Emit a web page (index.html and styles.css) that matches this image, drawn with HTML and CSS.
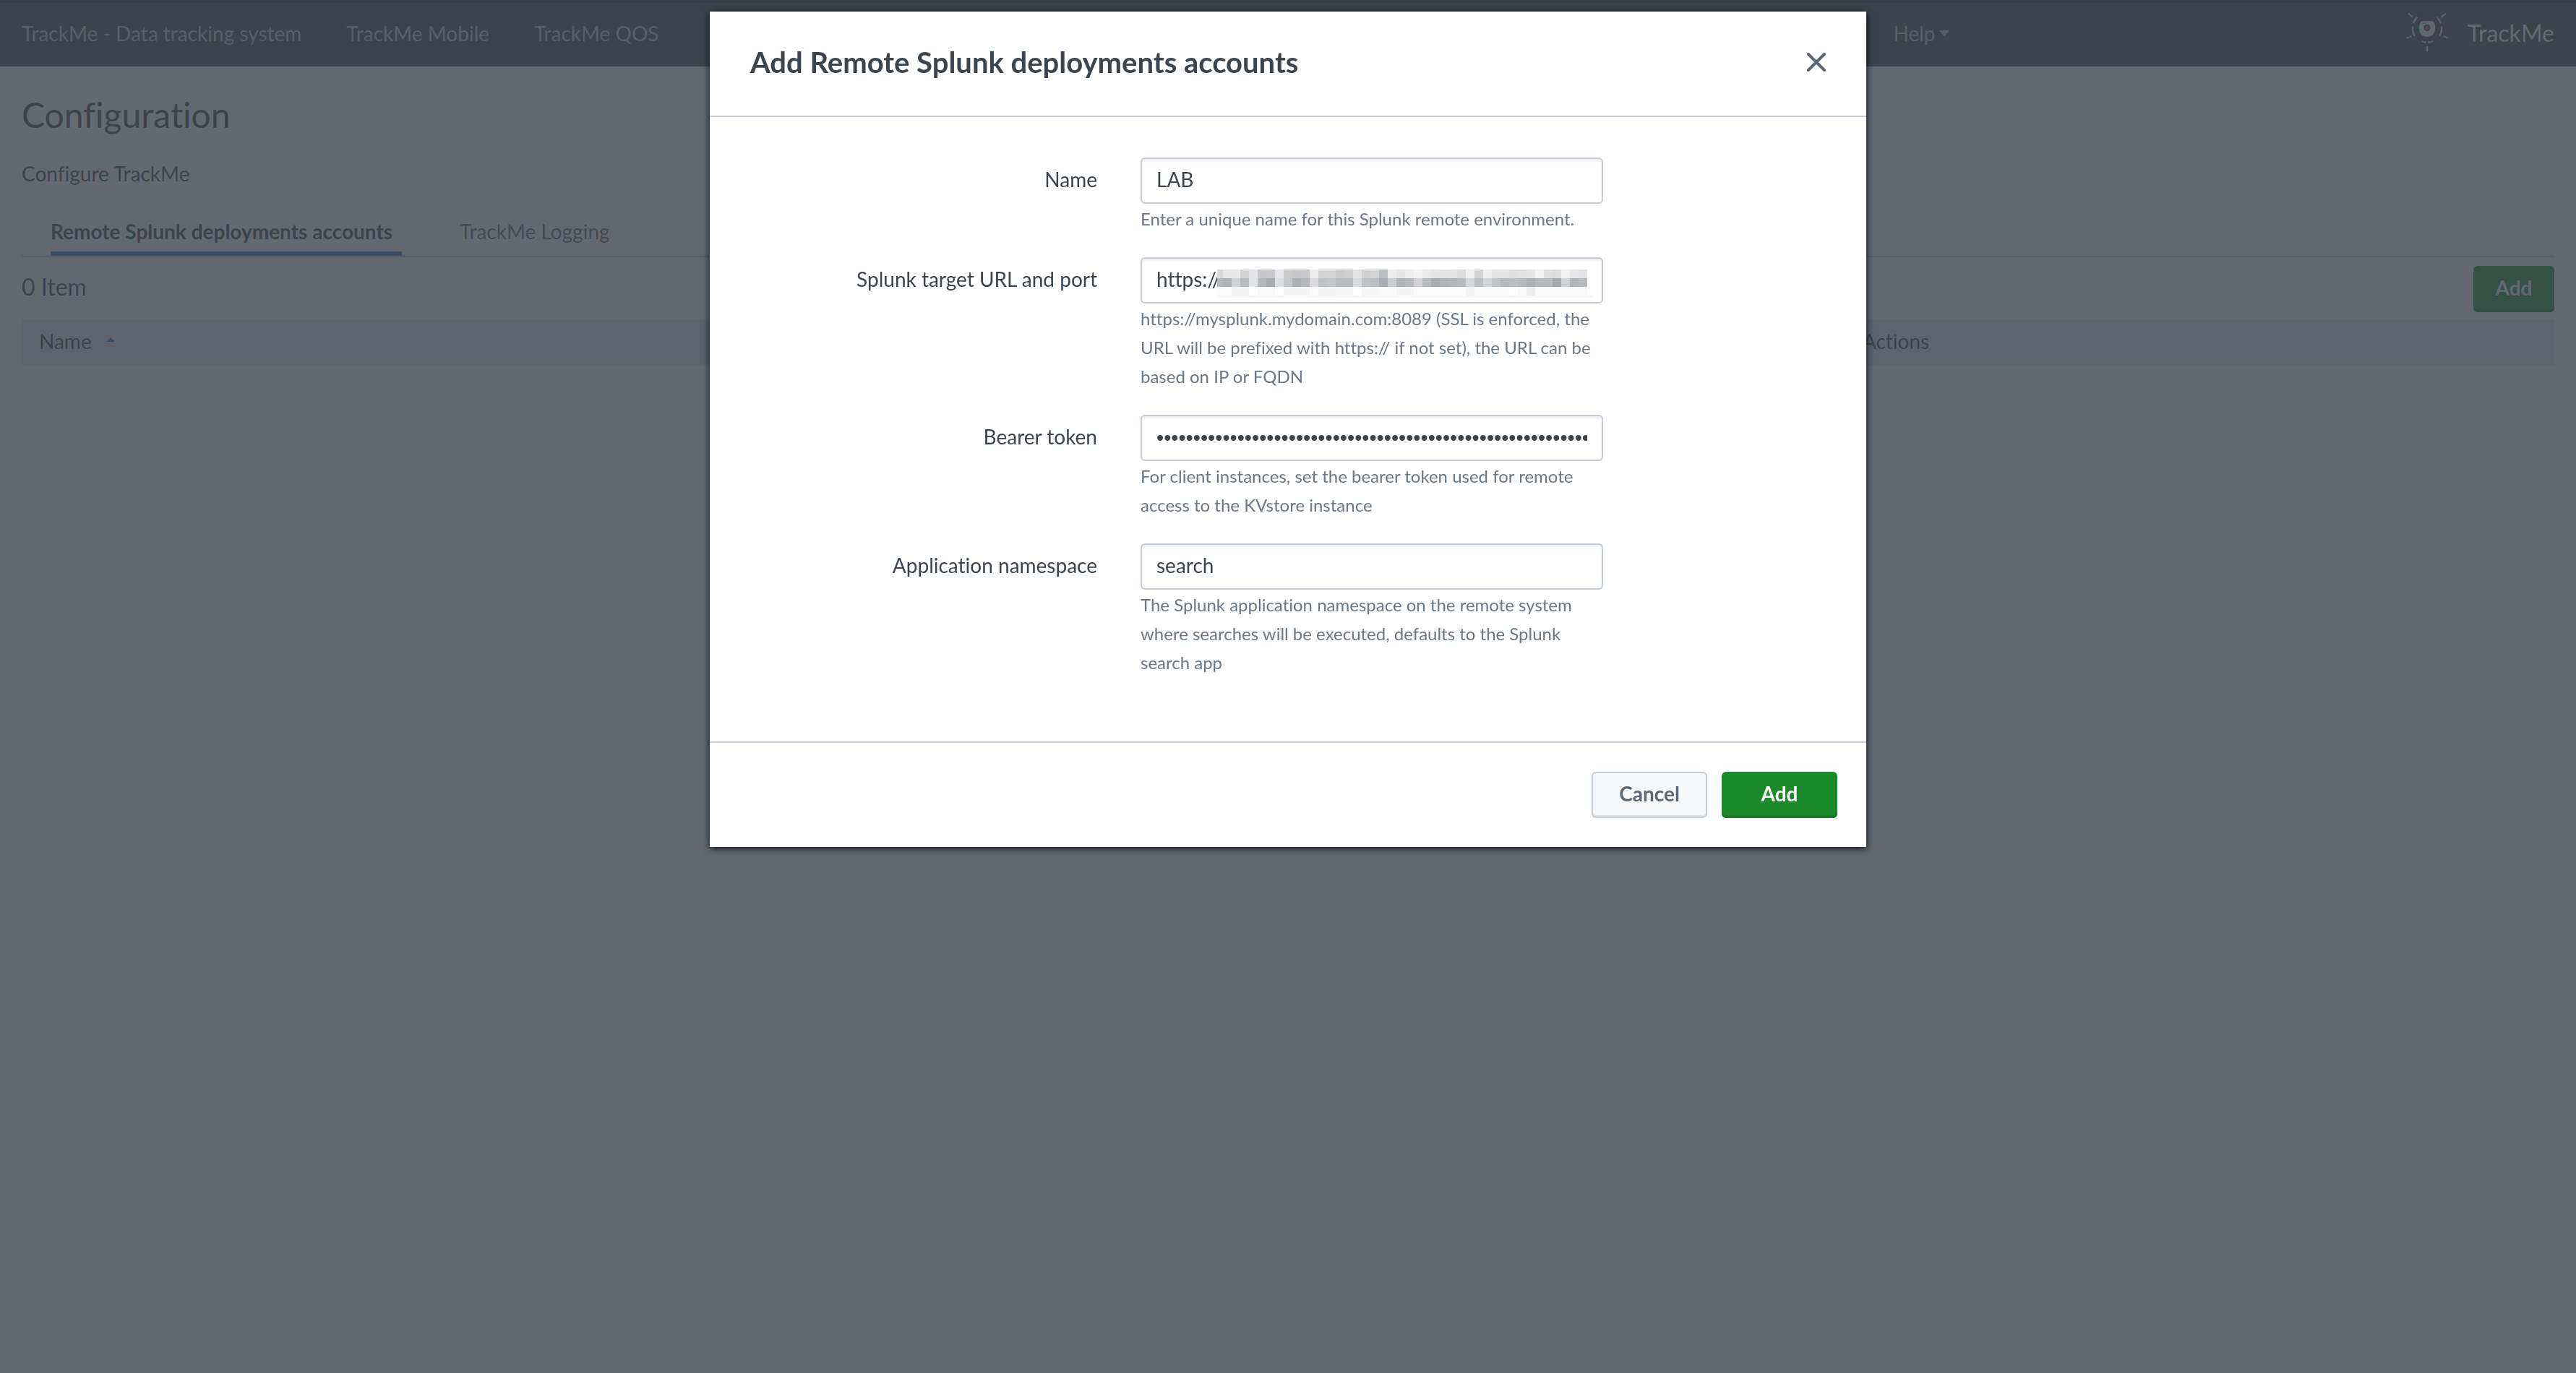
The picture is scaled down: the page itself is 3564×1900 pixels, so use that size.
FILE: index.html
```html
<!DOCTYPE html>
<html lang="en">
<head>
<meta charset="utf-8">
<title>TrackMe - Configuration</title>
<link rel="stylesheet" href="styles.css">
</head>
<body>
<header class="topbar">
  <nav class="nav">
    <a href="#">TrackMe - Data tracking system</a>
    <a href="#">TrackMe Mobile</a>
    <a href="#">TrackMe QOS</a>
  </nav>
  <nav class="nav">
    <a href="#" class="nav-menu">Help<span class="caret"></span></a>
  </nav>
  <a href="#" class="brand">
    <svg class="logo" viewBox="24 50 180 180" fill="none" stroke-linecap="butt" aria-hidden="true">
      <g stroke="#e3e6ea" stroke-width="7">
        <path d="M36 58L54 73M173 73L192 58M181 152L201 160M114 194V216"/>
        <path d="M28 161L48 152" stroke-dasharray="13 2"/>
        <path d="M73 73Q62 83 57 98M154 73Q166 83 171 98M54 112Q52 134 63 152M174 112Q176 134 165 152M91 173Q100 178 111 178M117 178Q128 178 138 173"/>
      </g>
      <g stroke="#20262c" stroke-width="3">
        <path d="M76 70Q83 63 92 59M152 70Q145 63 136 59M66 125H80M148 125H162M72 158Q78 166 86 170M156 158Q150 166 142 170M114 154V170"/>
      </g>
      <path d="M91 90H137Q148 99 148 119Q146 153 114 155Q82 153 80 119Q80 99 91 90Z" fill="#f2f4f6"/>
      <path d="M94 99H110" stroke="#8a929b" stroke-width="4"/>
      <circle cx="114" cy="117" r="14" fill="#3c444d"/>
      <circle cx="114" cy="117" r="7" fill="#e0503f"/>
    </svg>
    <span>TrackMe</span>
  </a>
</header>

<main class="page">
  <h1>Configuration</h1>
  <p class="lead">Configure TrackMe</p>
  <div class="tabs" role="tablist">
    <button type="button" role="tab" aria-selected="true" class="tab tab-active">Remote Splunk deployments accounts</button>
    <button type="button" role="tab" aria-selected="false" class="tab">TrackMe Logging</button>
  </div>
  <div class="toolbar">
    <span class="count">0 Item</span>
    <button type="button" class="btn btn-primary btn-compact">Add</button>
  </div>
  <table class="accounts">
    <thead>
      <tr><th class="col-name">Name<span class="sort"></span></th><th>Actions</th></tr>
    </thead>
  </table>
</main>

<div class="overlay">
  <form class="modal" role="dialog" aria-labelledby="modal-title">
    <div class="modal-head">
      <h2 id="modal-title">Add Remote Splunk deployments accounts</h2>
      <button type="button" class="close" aria-label="Close">
        <svg viewBox="0 0 26 26" fill="none" stroke="#5c6773" stroke-width="4" stroke-linecap="round"><path d="M2 2L24 24M24 2L2 24"/></svg>
      </button>
    </div>
    <div class="modal-body">
      <div class="field">
        <label for="name">Name</label>
        <div class="control">
          <input id="name" type="text" value="LAB">
          <p class="help">Enter a unique name for this Splunk remote environment.</p>
        </div>
      </div>
      <div class="field">
        <label for="url">Splunk target URL and port</label>
        <div class="control">
          <input id="url" type="text" value="https://">
          <span class="redacted" aria-hidden="true"></span>
          <p class="help">https://mysplunk.mydomain.com:8089 (SSL is enforced, the URL will be prefixed with https:// if not set), the URL can be based on IP or FQDN</p>
        </div>
      </div>
      <div class="field">
        <label for="token">Bearer token</label>
        <div class="control">
          <input id="token" type="password" value="0000000000000000000000000000000000000000000000000000000000000000000000">
          <p class="help">For client instances, set the bearer token used for remote access to the KVstore instance</p>
        </div>
      </div>
      <div class="field">
        <label for="namespace">Application namespace</label>
        <div class="control">
          <input id="namespace" type="text" value="search">
          <p class="help">The Splunk application namespace on the remote system where searches will be executed, defaults to the Splunk search app</p>
        </div>
      </div>
    </div>
    <div class="modal-foot">
      <button type="button" class="btn btn-secondary">Cancel</button>
      <button type="button" class="btn btn-primary">Add</button>
    </div>
  </form>
</div>
</body>
</html>
```
FILE: styles.css
```css
*, *::before, *::after { box-sizing: border-box; }

body {
  margin: 0;
  min-height: 100vh;
  background: #fff;
  color: #3c444d;
  font: 28px/40px Lato, "Open Sans", sans-serif;
  font-variant-ligatures: none;
}

h1, h2, p { margin: 0; }
a { color: inherit; text-decoration: none; }
button, input { font: inherit; color: inherit; margin: 0; }

/* Top bar */
.topbar {
  display: grid;
  grid-template-columns: 73.9% 1fr auto;
  align-items: center;
  height: 92px;
  padding: 0 30px 4px;
  border-top: 4px solid #1e242c;
  background: #3c444d;
  color: #c3cbd4;
}
.nav { display: flex; gap: 62px; }
.nav-menu { display: flex; align-items: center; gap: 6px; }
.caret {
  border: 7px solid transparent;
  border-top: 9px solid #c3cbd4;
  border-bottom: 0;
}
.brand {
  display: flex;
  align-items: center;
  gap: 26px;
  color: #fff;
  font-size: 32px;
}
.logo { width: 60px; height: 60px; }

/* Page */
.page { padding: 38px 30px; }
h1 { font-size: 48px; line-height: 58px; font-weight: 400; }
.lead { margin-top: 32px; }

.tabs {
  display: flex;
  gap: 80px;
  margin-top: 40px;
  padding-left: 40px;
  border-bottom: 2px solid #c3cbd4;
  box-shadow: inset 0 -2px #e1e6eb;
}
.tab {
  padding: 0 0 8px;
  border: 0;
  border-bottom: 6px solid transparent;
  background: none;
  color: #5c6773;
  text-align: left;
}
.tab-active {
  min-width: 486px;
  border-color: #2876bb;
  color: #3c444d;
  font-weight: 700;
}

.toolbar {
  display: flex;
  justify-content: space-between;
  align-items: flex-start;
  padding: 12px 0 10px;
}
.count { font-size: 32px; line-height: 58px; }

.accounts {
  width: 100%;
  border-collapse: collapse;
  table-layout: fixed;
  background: #e1e6ef;
}
.accounts th {
  padding: 0 24px 4px;
  line-height: 60px;
  font-weight: 400;
  text-align: left;
}
.col-name { width: 72%; }
.sort {
  display: inline-block;
  margin-left: 20px;
  border: 6px solid transparent;
  border-bottom-color: #2876bb;
  border-top: 0;
  vertical-align: 10px;
}

/* Buttons */
.btn {
  min-width: 160px;
  height: 64px;
  padding: 0 28px 4px;
  border: 0;
  border-radius: 6px;
  font-weight: 700;
}
.btn-primary {
  background: #1a8929;
  color: #fff;
  box-shadow: inset 0 -4px #187b25;
}
.btn-secondary {
  border: 2px solid #c3cbd4;
  background: #f7f8fa;
  color: #5c6773;
  box-shadow: inset 0 -2px #dfe1e3;
}
.btn-compact { min-width: 112px; }

/* Dialog */
.overlay {
  position: fixed;
  inset: 0;
  padding-top: 16px;
  background: rgba(60, 68, 77, 0.8);
}
.modal {
  width: 1600px;
  max-width: 100%;
  margin: 0 auto;
  background: #fff;
  box-shadow: 0 2px 10px rgba(0, 0, 0, 0.9);
}
.modal-head {
  display: flex;
  justify-content: space-between;
  padding: 46px 56px 50px;
  border-bottom: 2px solid #c3cbd4;
}
.modal-head h2 { font-size: 40px; line-height: 48px; font-weight: 700; }
.close {
  display: flex;
  align-items: center;
  padding: 0;
  border: 0;
  background: none;
}
.close svg { width: 26px; height: 26px; }

.modal-body { padding: 56px 0; }
.field {
  display: grid;
  grid-template-columns: 536px 640px;
  column-gap: 60px;
  margin-bottom: 33px;
}
.field label { line-height: 60px; text-align: right; }
.control { position: relative; }
.control input {
  display: block;
  width: 100%;
  height: 64px;
  padding: 0 20px 4px;
  border: 2px solid #c3cbd4;
  border-radius: 6px;
  background: #fff;
  box-shadow: inset 0 3px 3px #eeeff0;
}
.control input[type="password"] {
  padding-bottom: 0;
  font-family: "Liberation Sans", sans-serif;
  font-size: 29px;
}
.help {
  margin-top: 1px;
  color: #6b7785;
  font-size: 24px;
}

/* Mosaic that hides the host part of the address */
.redacted {
  position: absolute;
  top: 12px;
  left: 106px;
  width: 519px;
  height: 44px;
  background:
    linear-gradient(90deg, #d9dadc 0 8px, #e6e7e9 0 20px, #e8e8ea 0 32px, #d2d3d5 0 44px, #e4e5e8 0 56px, #c6c7cb 0 68px, #c8c9cc 0 80px, #e6e7ea 0 92px, #cacbcd 0 104px, #c6c7cb 0 116px, #c8c9cc 0 128px, #ececed 0 140px, #d2d3d5 0 152px, #d3d4d6 0 164px, #cacbcd 0 176px, #cdced0 0 188px, #e2e3e5 0 200px, #d0d1d3 0 212px, #d3d4d6 0 224px, #bbbfc4 0 236px, #ebecec 0 248px, #e5e6e8 0 260px, #eeeeee 0 272px, #f3f3f3 0 284px, #e9eaea 0 296px, #e6e6e8 0 308px, #e2e3e5 0 320px, #e3e4e6 0 332px, #dbdcde 0 344px, #f0f0f0 0 356px, #d2d3d5 0 368px, #eef0ef 0 380px, #e4e5e7 0 392px, #e5e6e8 0 404px, #dfe0e2 0 416px, #e1e2e4 0 428px, #e4e5e7 0 440px, #f2f2f2 0 452px, #dfe0e3 0 464px, #dcdddf 0 476px, #f2f2f2 0 488px, #e8e8ea 0 500px, #e2e3e6 0 512px) 0 5px / 512px 12px no-repeat,
    linear-gradient(90deg, #b8b9bd 0 8px, #afb2b6 0 20px, #d0d1d4 0 32px, #b8bbbe 0 44px, #e2e3e6 0 56px, #b6b7bb 0 68px, #a9abb1 0 80px, #dcdddf 0 92px, #c6c7cb 0 104px, #adb1b5 0 116px, #b5b8bb 0 128px, #dcdcde 0 140px, #c0c3c6 0 152px, #c3c4c8 0 164px, #babdc0 0 188px, #dadbdd 0 200px, #c0c3c6 0 212px, #babdc1 0 224px, #a9acb2 0 236px, #cdced1 0 248px, #afb2b6 0 260px, #b9babe 0 272px, #d0d1d3 0 284px, #b8bbbd 0 296px, #a8acb0 0 308px, #b0b3b8 0 320px, #b3b5b9 0 332px, #b9babe 0 344px, #d6d7d9 0 356px, #bcc0c3 0 368px, #d3d4d6 0 380px, #c0c4c6 0 392px, #b5b9bc 0 404px, #bbbfc2 0 416px, #b6babc 0 428px, #acb0b3 0 440px, #b6b9bc 0 452px, #b8b9bd 0 464px, #a6a8af 0 476px, #d1d2d4 0 488px, #b1b4b8 0 500px, #b8bbbe 0 512px) 0 17px / 512px 12px no-repeat,
    linear-gradient(90deg, #fcfcfc 0 20px, #f2f2f3 0 44px, #fff 0 56px, #f9f9fa 0 80px, #fff 0 92px, #f5f5f6 0 128px, #fcfcfc 0 140px, #f2f2f3 0 164px, #f6f6f7 0 188px, #fff 0 200px, #f6f6f7 0 224px, #fafafb 0 248px, #f5f5f6 0 272px, #fcfcfc 0 344px, #f3f3f4 0 356px, #f9f9f9 0 404px, #fff 0 416px, #f9f9f9 0 428px, #ececed 0 440px, #f9f9f9 0 512px) 0 29px / 512px 12px no-repeat,
    linear-gradient(#f7f8fa, #f7f8fa) 0 41px / 519px 3px no-repeat,
    #fff;
}

.modal-foot {
  display: flex;
  justify-content: flex-end;
  gap: 20px;
  padding: 40px;
  border-top: 2px solid #c3cbd4;
}
```
